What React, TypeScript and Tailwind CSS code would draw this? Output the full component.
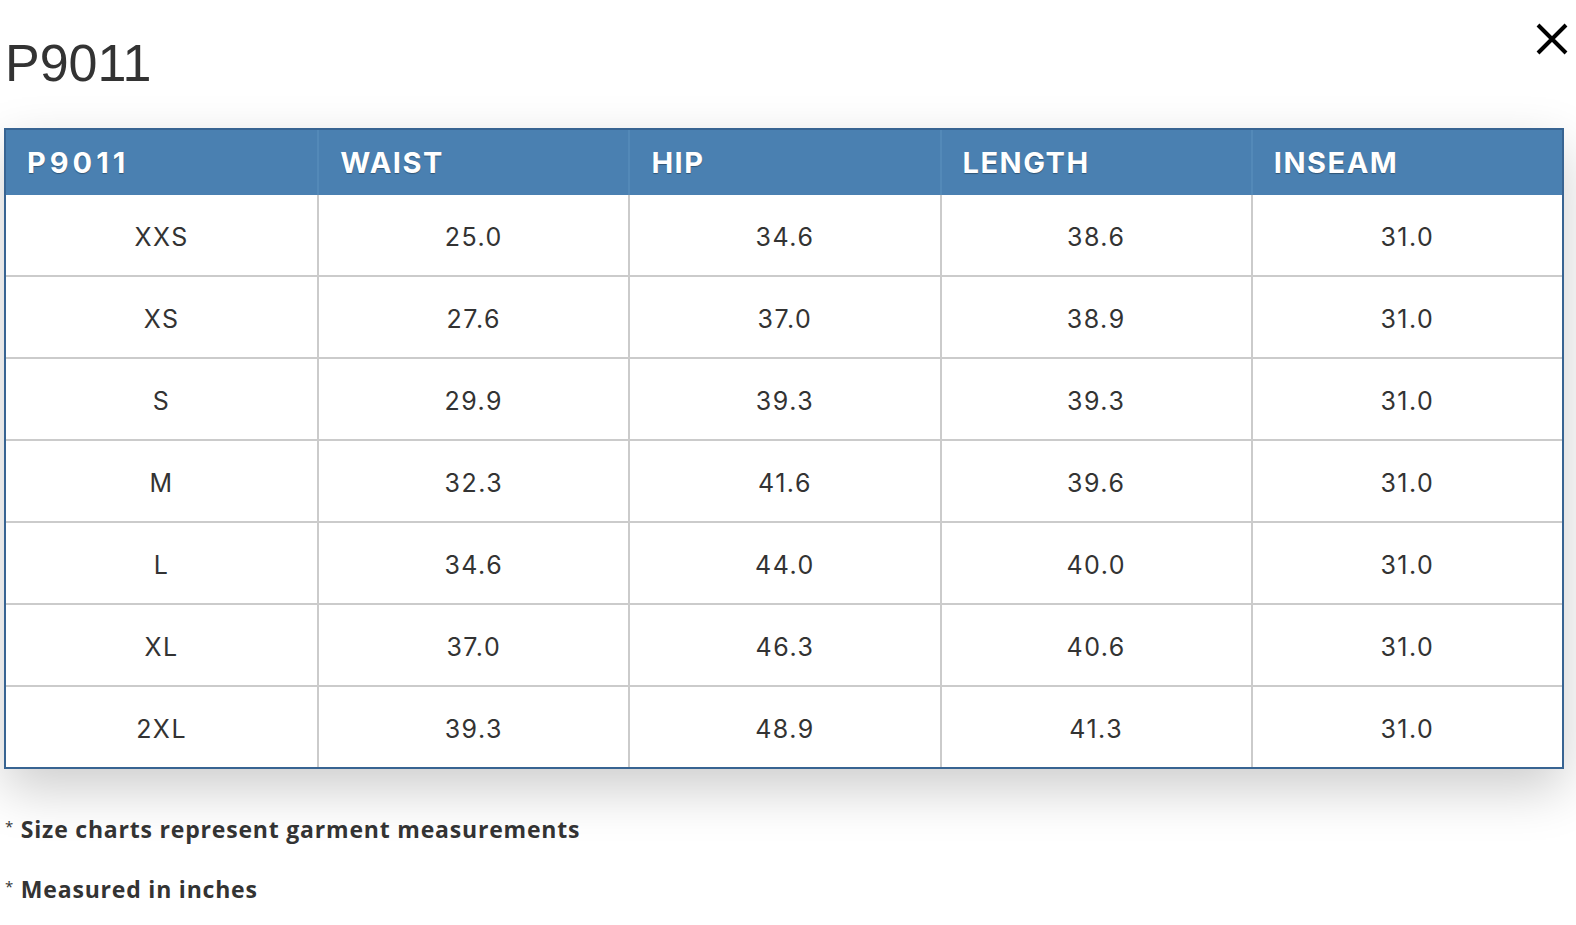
import React from "react";

const rows: string[][] = [
  ["XXS", "25.0", "34.6", "38.6", "31.0"],
  ["XS", "27.6", "37.0", "38.9", "31.0"],
  ["S", "29.9", "39.3", "39.3", "31.0"],
  ["M", "32.3", "41.6", "39.6", "31.0"],
  ["L", "34.6", "44.0", "40.0", "31.0"],
  ["XL", "37.0", "46.3", "40.6", "31.0"],
  ["2XL", "39.3", "48.9", "41.3", "31.0"],
];

const headers = ["P9011", "WAIST", "HIP", "LENGTH", "INSEAM"];

export default function App() {
  return (
    <div className="w-[1576px] h-[925px] bg-white overflow-hidden">
      <div className="flex items-start justify-between">
        <h1
          className="pt-[37px] pl-[5px] text-[52px] leading-none text-[#333] font-normal"
          style={{ fontFamily: '"Liberation Sans", Arial, sans-serif' }}
        >
          P9011
        </h1>
        <button aria-label="Close" className="mt-[23px] mr-[8px] w-[32px] h-[32px]">
          <svg width="32" height="32" viewBox="0 0 32 32">
            <path d="M2 2 L30 30 M30 2 L2 30" stroke="#000" strokeWidth="4" fill="none" />
          </svg>
        </button>
      </div>

      <div
        className="mt-[39px] ml-[4px] mr-[12px] border-2 border-[#386492] bg-white shadow-[0_20px_50px_rgba(0,0,0,0.2)]"
        style={{ fontFamily: "Inter, sans-serif" }}
      >
        <div className="grid grid-cols-5 bg-[#4a80b1] h-[65px]">
          {headers.map((h, i) => (
            <div
              key={h}
              className={`flex items-center pl-[21px] text-white font-bold text-[29px] [text-shadow:0_1px_1px_rgba(0,0,0,0.35)] ${
                i > 0 ? "border-l-2 border-[#5389b8] tracking-[1.5px]" : "tracking-[4px]"
              }`}
            >
              {h}
            </div>
          ))}
        </div>
        {rows.map((r, ri) => (
          <div
            key={ri}
            className={`grid grid-cols-5 ${ri > 0 ? "h-[82px] border-t-2 border-[#cbcbcb]" : "h-[80px]"}`}
          >
            {r.map((c, ci) => (
              <div
                key={ci}
                className={`flex items-center justify-center pt-[5px] text-[25px] text-[#333] tracking-[1.5px] ${
                  ci > 0 ? "border-l-2 border-[#cbcbcb]" : ""
                }`}
              >
                {c}
              </div>
            ))}
          </div>
        ))}
      </div>

      <div
        className="pl-[5px] pt-[30px] text-[#333] text-[23px] leading-[60px] font-bold tracking-[0.8px]"
        style={{ fontFamily: '"Open Sans", sans-serif' }}
      >
        <p>
          <span className="font-normal text-[15px] leading-none align-[6px]">*</span> Size charts represent garment measurements
        </p>
        <p>
          <span className="font-normal text-[15px] leading-none align-[6px]">*</span> Measured in inches
        </p>
      </div>
    </div>
  );
}
